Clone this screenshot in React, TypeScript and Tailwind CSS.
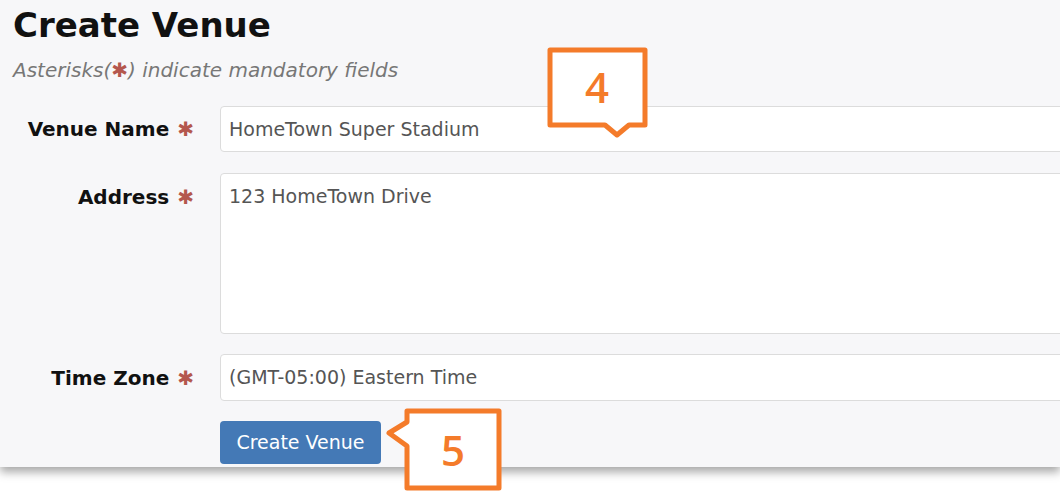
import React from "react";

const font = { fontFamily: '"DejaVu Sans", Verdana, sans-serif' };

function Star() {
  return <span className="text-[#b4574e] ml-[8px]">✱</span>;
}

export default function App() {
  return (
    <div className="relative w-[1060px] h-[497px] overflow-hidden bg-white" style={font}>
      <div className="relative bg-[#f7f7f9] h-[467px] shadow-[0_5px_9px_rgba(0,0,0,0.35)] pl-[13px] pt-[2px]">
        <h1 className="text-[34px] font-bold leading-[46px] text-[#111]">Create Venue</h1>
        <p className="italic text-[20px] leading-[26px] text-[#777] mt-[9px]">
          Asterisks(<span className="text-[#b4574e] not-italic">✱</span>) indicate mandatory fields
        </p>
        <div className="flex flex-col mt-[23px]">
          <div className="flex items-center">
            <label className="shrink-0 w-[181px] text-right text-[20px] font-bold text-[#111]">
              Venue Name<Star />
            </label>
            <div className="shrink-0 ml-[26px] w-[900px] h-[46px] bg-white border border-[#dcdcdc] rounded-[4px] flex items-center px-[8px] text-[19px] text-[#555]">
              HomeTown Super Stadium
            </div>
          </div>
          <div className="flex items-start mt-[21px]">
            <label className="shrink-0 w-[181px] text-right text-[20px] font-bold text-[#111] pt-[9px]">
              Address<Star />
            </label>
            <div className="shrink-0 ml-[26px] w-[900px] h-[161px] bg-white border border-[#dcdcdc] rounded-[4px] px-[8px] pt-[8px] text-[19px] text-[#555]">
              123 HomeTown Drive
            </div>
          </div>
          <div className="flex items-center mt-[20px]">
            <label className="shrink-0 w-[181px] text-right text-[20px] font-bold text-[#111]">
              Time Zone<Star />
            </label>
            <div className="shrink-0 ml-[26px] w-[900px] h-[47px] bg-white border border-[#dcdcdc] rounded-[4px] flex items-center px-[8px] text-[19px] text-[#555]">
              (GMT-05:00) Eastern Time
            </div>
          </div>
          <div className="flex mt-[20px]">
            <div className="shrink-0 w-[181px]" />
            <button className="shrink-0 ml-[26px] w-[161px] h-[43px] bg-[#4479b6] rounded-[4px] text-white text-[19px]">
              Create Venue
            </button>
          </div>
        </div>
      </div>

      {/* Callout 4 */}
      <svg className="absolute left-[545px] top-[45px]" width="106" height="95" viewBox="0 0 106 95">
        <path
          d="M5 5 H100 V80 H84 L72 90 L60 80 H5 Z"
          fill="white"
          stroke="#f47b2a"
          strokeWidth="5"
          strokeLinejoin="round"
        />
        <text x="52" y="58" textAnchor="middle" fontSize="42" fontWeight="600" fill="#f47b2a" fontFamily="'Open Sans', sans-serif">4</text>
      </svg>

      {/* Callout 5 */}
      <svg className="absolute left-[383px] top-[406px]" width="124" height="88" viewBox="0 0 124 88">
        <path
          d="M24 5 H116 V82 H24 V40 L6 27 L24 16 Z"
          fill="white"
          stroke="#f47b2a"
          strokeWidth="5"
          strokeLinejoin="round"
        />
        <text x="70" y="60" textAnchor="middle" fontSize="42" fontWeight="600" fill="#f47b2a" fontFamily="'Open Sans', sans-serif">5</text>
      </svg>
    </div>
  );
}
